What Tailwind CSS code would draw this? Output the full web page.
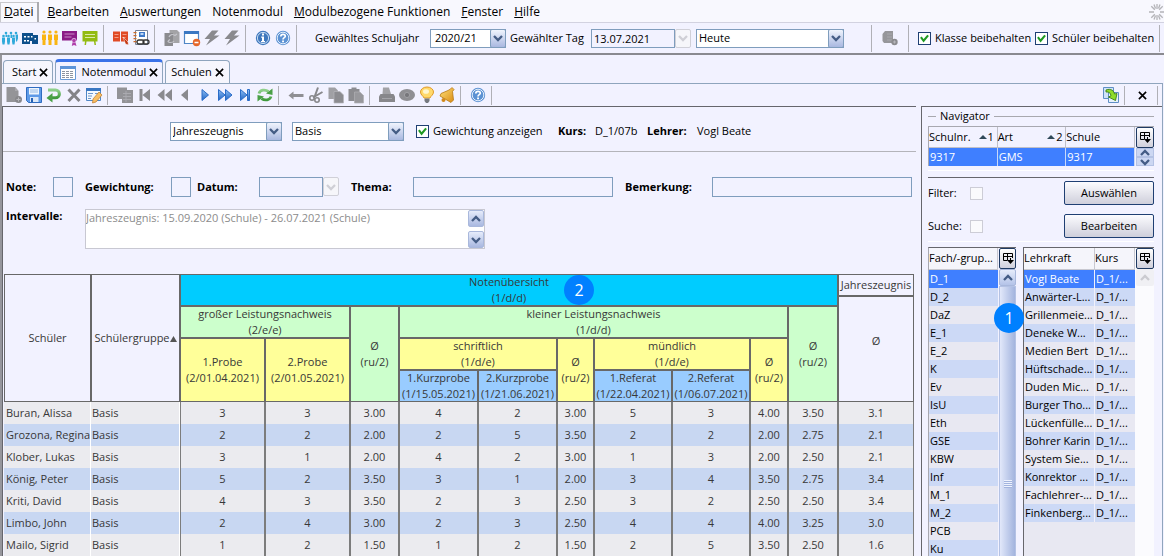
<!DOCTYPE html>
<html lang="de">
<head>
<meta charset="utf-8">
<title>Notenmodul</title>
<script src="https://cdn.jsdelivr.net/npm/@tailwindcss/browser@4"></script>
</head>
<body class="relative flex h-screen flex-col overflow-hidden bg-[#f2f2ff] font-['Open_Sans','Noto_Sans',sans-serif] text-xs text-black">

<svg class="absolute h-0 w-0">
  <defs>
    <linearGradient id="gb" x1="0" y1="0" x2="0" y2="1"><stop offset="0" stop-color="#8fc0f5"/><stop offset="1" stop-color="#1f63c4"/></linearGradient>
    <linearGradient id="gg" x1="0" y1="0" x2="0" y2="1"><stop offset="0" stop-color="#8fd08a"/><stop offset="1" stop-color="#3f9a3c"/></linearGradient>
    <linearGradient id="gy" x1="0" y1="0" x2="1" y2="1"><stop offset="0" stop-color="#ffe27a"/><stop offset="1" stop-color="#d98a12"/></linearGradient>
  </defs>
  <symbol id="i-pupils" viewBox="0 0 18 18"><g fill="#2fa9da"><circle cx="5" cy="4" r="1.300"/><circle cx="10" cy="4" r="1.300"/><circle cx="15" cy="4" r="1.300"/><circle cx="2.500" cy="7" r="1.300"/><circle cx="7.500" cy="7" r="1.300"/><circle cx="12.500" cy="7" r="1.300"/><path d="M4.500 5.500H6v2.500h-1.500zM1 8.500h3v4l-.5 3h-2L1 12.500zM6 8.500h3v4l-.5 3h-2l-.5-3zM11 8.500h3v4l-.5 3h-2l-.5-3zM9.500 5.500H11V9H9.500zM14.500 5.500H17v4l-1 3h-1z"/></g></symbol>
  <symbol id="i-school" viewBox="0 0 18 18"><path fill="#0d4f8b" d="M1 4h11v2h5v9h-6v-3H9v3H1z"/><path fill="#fff" d="M3 7h2v1.500H3zM6.500 7h2v1.500h-2zM10 7h1.500v1.500H10zM3 11h2v1.500H3zM6 11h2v1.500H6zM13.500 9h1.500v1.500h-1.500z"/></symbol>
  <symbol id="i-people" viewBox="0 0 18 18"><g fill="#f9b514"><circle cx="3" cy="3" r="1.600"/><circle cx="9" cy="3" r="1.600"/><circle cx="15" cy="3" r="1.600"/><path d="M1 5.500h4V11h-.5v5h-3v-5H1zM7 5.500h4V11h-.5v5h-3v-5H7zM13 5.500h4V11h-.5v5h-3v-5H13z"/></g></symbol>
  <symbol id="i-board-p" viewBox="0 0 18 18"><path fill="#8b1a86" d="M1 2h15v9.500H1z"/><path stroke="#d9a8d7" stroke-width=".8" d="M3.500 5h10M3.500 8h7"/><circle cx="13" cy="11.500" r="2.200" fill="#b03faa" stroke="#f2f2ff" stroke-width=".6"/><path fill="#b03faa" d="M11.500 13.500h3l1 3.500-2.500-1-2.200 1z"/></symbol>
  <symbol id="i-board-g" viewBox="0 0 18 18"><path fill="#93bb12" d="M1.500 2h15v10.500h-2L15 16h-1.500L13 12.500H5.500L5 16H3.500L4 12.500H1.500z"/><path stroke="#e3efba" stroke-width=".9" d="M4 5.500h10M4 8.500h10"/></symbol>
  <symbol id="i-book-r" viewBox="0 0 18 18"><path fill="#e04a26" d="M1 2.500h7v10H1zM9 2.500h7v10H9z"/><path stroke="#f6b3a2" stroke-width=".8" d="M2.500 5.500h4M2.500 8.500h4M10.500 5.500h4M10.500 8.500h3"/><path fill="#c23512" stroke="#fff" stroke-width=".5" d="M11 8l5 5 .5 3-3-1z"/></symbol>
  <symbol id="i-addr" viewBox="0 0 18 18"><path fill="#fff" stroke="#77839a" d="M3.500 1.500h12v14h-12z"/><path fill="#c96a2a" d="M1.500 3h3v1.200h-3zM1.500 6h3v1.200h-3zM1.500 9h3v1.200h-3zM1.500 12h3v1.200h-3z"/><path fill="#3d78c9" d="M7 3h6v5H7z"/><path fill="#bcd6f5" d="M8.500 4h3v2h-3z"/><path fill="none" stroke="#333" stroke-width="1.300" d="M7 11h3a2 2 0 010 4H7a2 2 0 010-4zM13 11h2a2 2 0 010 4h-2a2 2 0 010-4z"/></symbol>
  <symbol id="i-files" viewBox="0 0 18 18"><path fill="#a3a3a6" d="M6.500 1H14l2.500 2.500V14h-10z"/><path fill="#8b8b8f" d="M1.500 4H10v13H1.500z"/><path fill="none" stroke="#c4c4ca" stroke-width="1.200" d="M5 12c0 2 5 2 6 0M7 10.500L5 12M6 8c1-3 4-3 6-1.500L14 5"/></symbol>
  <symbol id="i-win" viewBox="0 0 18 18"><path fill="#fff" stroke="#4f86c6" stroke-width="1.200" d="M1.500 2.500h14v12h-14z"/><path fill="#3a77c2" d="M1 2h15v3H1z"/><circle cx="13.500" cy="13.500" r="3.700" fill="#e5672a"/><path stroke="#fff" stroke-width="1.500" d="M11.500 13.500h4"/></symbol>
  <symbol id="i-bolt" viewBox="0 0 18 18"><path fill="#8a8a8e" d="M9 1.500h6.500L11 6.500h5.500L3 16.500 7 10H1.500z"/></symbol>
  <symbol id="i-info" viewBox="0 0 18 18"><circle cx="9" cy="9" r="7.200" fill="#3f78bd"/><circle cx="9" cy="9" r="5.600" fill="none" stroke="#d6e6f8" stroke-width=".9"/><path fill="#fff" d="M8 4.500h2v2H8zM7.200 7.500H10V12h1v1.200H7V12h1V8.700h-.8z"/></symbol>
  <symbol id="i-help" viewBox="0 0 18 18"><circle cx="9" cy="9" r="7.200" fill="#5c92d3"/><circle cx="9" cy="9" r="5.800" fill="none" stroke="#e4effb" stroke-width="1"/><path fill="none" stroke="#fff" stroke-width="1.700" d="M6.800 7.500c0-3 4.500-2.800 4.500-.3 0 1.500-2.300 1.500-2.300 3.300"/><path fill="#fff" d="M8.100 11.500H10v1.700H8.100z"/></symbol>
  <symbol id="i-db" viewBox="0 0 18 18"><path fill="#96969a" d="M1.500 5L4 2h8v12H3l-1.500-2z"/><path stroke="#a8a8ad" d="M6 5h5M6 8h5M6 11h5"/><circle cx="13.500" cy="13" r="3.200" fill="#8b8b8f"/><path stroke="#b5b5ba" d="M12 13h3M13.500 11.500v3"/></symbol>
  <symbol id="i-doc" viewBox="0 0 18 18"><path fill="#949498" d="M1.500 1H10l3.500 4v11h-12z"/><path fill="#a9a9ae" d="M10 1l3.500 4H10z"/><circle cx="13.500" cy="13.500" r="3.500" fill="#87878b"/><path stroke="#b8b8bd" d="M11.500 13.500h4M13.500 11.500v4"/></symbol>
  <symbol id="i-save" viewBox="0 0 18 18"><path fill="#5e9ae8" stroke="#2f6cc0" d="M1.500 1.500h15v15h-13l-2-2z"/><path fill="#eef5fd" d="M4 2h10v6.500H4z"/><path stroke="#7ea9de" stroke-width=".8" d="M5 4h8M5 6h8"/><path fill="#dbe8f9" d="M5 11h8.500v5H5z"/><path fill="#2762b5" d="M6 12h2v4H6z"/></symbol>
  <symbol id="i-undo" viewBox="0 0 18 18"><path fill="none" stroke="url(#gg)" stroke-width="3" d="M3 4h7.500a3.800 3.800 0 010 7.800H6"/><path fill="#4aa046" d="M7.500 7v9.500L1.500 12z"/></symbol>
  <symbol id="i-x" viewBox="0 0 18 18"><path fill="none" stroke="#838387" stroke-width="3" d="M3.500 3.500l11 11.500M14.500 3.500l-11 11.500"/></symbol>
  <symbol id="i-edit" viewBox="0 0 18 18"><path fill="#f4f8fe" stroke="#4f86c6" d="M1.500 2.500h14v12h-14z"/><path fill="#3a77c2" d="M1 2h15v3H1z"/><path stroke="#6f97cc" d="M3 7.500h5M3 10h4M3 12.500h3M10 7.500h4"/><path fill="#f8bd62" stroke="#c07a24" stroke-width=".7" d="M14 6l3 3-6 7-3.500 1L8 13z"/></symbol>
  <symbol id="i-grid" viewBox="0 0 18 18"><path fill="#939397" d="M1 1.500h10V4h6v13H6v-4H1z"/><path stroke="#adadb2" stroke-width=".9" d="M7 7.500h8M7 10.500h8M7 13.500h8M10 5v11"/></symbol>
  <symbol id="i-first" viewBox="0 0 18 18"><path fill="#8a8a8e" d="M3.500 3h3v12h-3zM14 3v12L6.500 9z"/></symbol>
  <symbol id="i-rew" viewBox="0 0 18 18"><path fill="#8a8a8e" d="M8.500 3v12L1.500 9zM16 3v12L9 9z"/></symbol>
  <symbol id="i-prev" viewBox="0 0 18 18"><path fill="#8a8a8e" d="M12 3v12L5 9z"/></symbol>
  <symbol id="i-next" viewBox="0 0 18 18"><path fill="url(#gb)" stroke="#2a6cc8" d="M6 3.500v11L12.500 9z"/></symbol>
  <symbol id="i-ff" viewBox="0 0 18 18"><path fill="url(#gb)" stroke="#2a6cc8" d="M2.500 3.500v11L9 9zM9.500 3.500v11L16 9z"/></symbol>
  <symbol id="i-last" viewBox="0 0 18 18"><path fill="url(#gb)" stroke="#2a6cc8" d="M4.500 3.500v11L11 9zM11.500 3.500h2v11h-2z"/></symbol>
  <symbol id="i-refresh" viewBox="0 0 18 18"><path fill="none" stroke="url(#gg)" stroke-width="2.800" d="M3 7.500C4 3.800 9 3 12.500 5.500M15 10.500C14 14.200 9 15 5.500 12.500"/><path fill="#4aa046" d="M16.500 2.500V9L10 7.500zM1.500 15.500V9L8 10.500z"/></symbol>
  <symbol id="i-arrow" viewBox="0 0 18 18"><path fill="#8f8f93" d="M1.500 9.500l5-4v2.500h10v3h-10v2.500z"/></symbol>
  <symbol id="i-cut" viewBox="0 0 18 18"><path fill="none" stroke="#88888c" stroke-width="2" d="M11 1.500L7.500 11M15.500 6L6 11.500"/><circle cx="5" cy="12" r="2.200" fill="none" stroke="#88888c" stroke-width="1.600"/><circle cx="10" cy="14" r="2.200" fill="none" stroke="#88888c" stroke-width="1.600"/></symbol>
  <symbol id="i-copy" viewBox="0 0 18 18"><path fill="#a0a0a4" d="M1.500 1.500H8L11 4.500V13H1.500z"/><path fill="#8c8c90" stroke="#b6b6bb" stroke-width=".7" d="M7 5.500h6l3.500 3.500v8H7z"/></symbol>
  <symbol id="i-paste" viewBox="0 0 18 18"><path fill="#8c8c90" d="M1.500 3h3V1.500h5V3h3v12h-11z"/><path fill="#98989c" stroke="#b0b0b5" stroke-width=".7" d="M7.500 6H13l3.500 3.500V17h-9z"/></symbol>
  <symbol id="i-print" viewBox="0 0 18 18"><path fill="#a2a2a6" d="M5 1.500h6L13 8H4.500z"/><path fill="#87878b" d="M2.500 8h13l1.500 2.500V16H1v-5.500z"/><path stroke="#a4a4a9" d="M4 12.500h10"/></symbol>
  <symbol id="i-eye" viewBox="0 0 18 18"><ellipse cx="9" cy="9" rx="8" ry="6" fill="#8f8f93"/><circle cx="9" cy="9" r="2.600" fill="#77777b" stroke="#a0a0a4"/></symbol>
  <symbol id="i-bulb" viewBox="0 0 18 18"><path fill="#ffd96b" stroke="#e09a28" d="M6 12C5.500 10 2.500 9 2.500 6A6.500 5 0 0115.500 6c0 3-3 4-3.500 6z"/><ellipse cx="8" cy="5.500" rx="3" ry="2.300" fill="#fff6d0"/><path fill="#75797f" d="M6.500 12.500h5V15l-1.500 2H8l-1.500-2z"/></symbol>
  <symbol id="i-bell" viewBox="0 0 18 18"><path fill="url(#gy)" stroke="#b87812" stroke-width=".8" d="M14 1.500l2 2-1.500 2 1 8.500-2.500 2.500L2 10l1-2.500 7-3L12.500 3z"/><circle cx="5.500" cy="14" r="2" fill="#d1891a"/></symbol>
  <symbol id="i-export" viewBox="0 0 18 18"><path fill="#cfe3f8" stroke="#5f8fc4" d="M1.500 1.500h10v11h-10z"/><path fill="#e6f1fb" stroke="#5f8fc4" d="M6.500 6.500h10v10h-10z"/><path fill="#8fdc2a" stroke="#3c7f12" stroke-width=".9" d="M4 4c5-2 8 1 8.500 4L15 7.500 13.500 14.500 6.500 11l2.500-1.200C8.500 7 7 5.500 4 6z"/></symbol>
  <symbol id="i-table" viewBox="0 0 16 14"><path fill="#fff" stroke="#6a9ad4" d="M.5.500h15v13H.5z"/><path fill="#5d94d8" d="M0 0h16v3H0z"/><path stroke="#8d949f" stroke-dasharray="3 1" d="M2 5.500h12M2 7.500h12M2 9.500h12M2 11.500h12"/></symbol>
  <symbol id="i-down" viewBox="0 0 10 8"><path fill="none" stroke="currentColor" stroke-width="2.300" d="M1 2l4 4 4-4"/></symbol>
  <symbol id="i-up" viewBox="0 0 10 8"><path fill="none" stroke="currentColor" stroke-width="2.300" d="M1 6l4-4 4 4"/></symbol>
  <symbol id="i-tick" viewBox="0 0 10 10"><path fill="none" stroke="#1f9a22" stroke-width="2.300" d="M1 3.500l3 4 5-6"/></symbol>
  <symbol id="i-close" viewBox="0 0 10 10"><path fill="none" stroke="#000" stroke-width="1.800" d="M1 1l8 8M9 1L1 9"/></symbol>
  <symbol id="i-cols" viewBox="0 0 12 13"><path fill="none" stroke="#000" d="M5 8.500H1.500v-7h9V6M1.500 4.500h9M5.500 1.500v7"/><path fill="#000" d="M5 8h7l-3.500 4zM8 6h1v2H8z"/></symbol>
  <symbol id="i-spin" viewBox="0 0 16 16"><path stroke="#b4b4b8" stroke-width="1.300" d="M8 0v5M8 11v5M0 8h5M11 8h5M2.300 2.300l3.500 3.500M10.200 10.200l3.500 3.500M13.700 2.300l-3.500 3.500M5.800 10.200l-3.500 3.500M5 .6l1.500 4M9.500 11.400l1.500 4M11 .6l-1.500 4M6.500 11.400l-1.500 4"/></symbol>
</svg>

<nav class="flex h-[23px] shrink-0 items-center border-b border-[#d2d2e0] bg-[#f8f8fe] pt-0.5 text-xs">
  <a href="#" class="mr-2 flex h-full items-center border-r-2 border-[#aaaaae] pr-1 pl-1 shadow-[inset_1px_1px_0_#c8c8cc]"><span><u>D</u>atei</span></a>
  <a href="#" class="mr-[11px]"><u>B</u>earbeiten</a>
  <a href="#" class="mr-[11px]"><u>A</u>uswertungen</a>
  <a href="#" class="mr-[11px]">Notenmodul</a>
  <a href="#" class="mr-[11px]"><u>M</u>odulbezogene Funktionen</a>
  <a href="#" class="mr-[11px]"><u>F</u>enster</a>
  <a href="#"><u>H</u>ilfe</a>
  <svg class="-mr-px ml-auto h-4 w-4"><use href="#i-spin"/></svg>
</nav>

<div class="flex h-8 shrink-0 items-center border-b-2 border-[#8a8a90] text-[11px]">
  <div id="tb1" class="flex items-center"></div>
  <label for="year" class="ml-[11px] w-[115px]">Gewähltes Schuljahr</label>
  <span class="relative flex w-[76px]"><select id="year" class="h-[19px] w-full appearance-none border border-[#7f9dbd] bg-white pl-1 leading-4"><option>2020/21</option></select><span data-arrow></span></span>
  <label for="day" class="ml-1 w-[81px] whitespace-nowrap">Gewählter Tag</label>
  <span class="relative flex w-[100px]"><input id="day" value="13.07.2021" class="mr-4 h-[19px] w-[84px] border border-[#7f9dbd] bg-transparent pl-0.5"><span data-arrow="off"></span></span>
  <span class="relative ml-[5px] flex w-[148px]"><select aria-label="Tag" class="h-[19px] w-full appearance-none border border-[#7f9dbd] bg-white pl-0.5 leading-4"><option>Heute</option></select><span data-arrow></span></span>
  <span class="ml-[27px] h-[27px] w-px bg-[#b0b0b6]"></span>
  <button class="mx-2 flex w-5 justify-center" aria-label="Datenbank"><svg class="h-[18px] w-[18px]"><use href="#i-db"/></svg></button>
  <span class="mr-[9px] h-[27px] w-px bg-[#b0b0b6]"></span>
  <label class="flex w-[117px] items-center gap-1 whitespace-nowrap"><span data-check></span>Klasse beibehalten</label>
  <label class="flex items-center gap-1 whitespace-nowrap"><span data-check></span>Schüler beibehalten</label>
  <span class="mr-1 ml-auto h-[27px] w-px bg-[#b0b0b6]"></span>
</div>

<div class="flex min-h-0 flex-1 flex-col border-l-2 border-[#96969c] pr-px">
  <div role="tablist" class="flex h-[29px] shrink-0 items-end gap-0.5 border-b border-[#8fa5bd] pl-px">
    <button role="tab" class="flex h-[23px] items-center gap-[3px] rounded-t-sm border border-b-0 border-[#8fa5bd] bg-[#f6f6fd] pr-1 pl-2 text-[11px]">Start<svg class="h-[9px] w-[9px]"><use href="#i-close"/></svg></button>
    <button role="tab" aria-selected="true" class="flex h-6 items-center gap-[3px] rounded-t-sm border border-t-3 border-b-0 border-[#8fa5bd] border-t-[#3a72e8] bg-[#f2f2ff] px-1 text-[11px]"><svg class="mr-0.5 h-[14px] w-4"><use href="#i-table"/></svg>Notenmodul<svg class="h-[9px] w-[9px]"><use href="#i-close"/></svg></button>
    <button role="tab" class="flex h-[23px] items-center gap-[3px] rounded-t-sm border border-b-0 border-[#8fa5bd] bg-[#f6f6fd] px-[5px] text-[11px]">Schulen<svg class="h-[9px] w-[9px]"><use href="#i-close"/></svg></button>
  </div>

  <div class="flex min-h-0 flex-1 flex-col border-r border-[#8fa5bd]">
  <div class="flex h-[22px] shrink-0 items-center">
    <div id="tb2" class="flex items-center pl-0.5"></div>
    <button class="ml-auto flex h-[22px] w-5 items-center justify-center" aria-label="Export"><svg class="h-[18px] w-[18px]"><use href="#i-export"/></svg></button>
    <span class="mx-[3px] h-[19px] w-px bg-[#b0b0b6]"></span>
    <button class="flex w-[29px] justify-center" aria-label="Schließen"><svg class="h-[9px] w-[9px]"><use href="#i-close"/></svg></button>
    <span class="mr-1 h-[19px] w-px bg-[#b0b0b6]"></span>
  </div>

  <div class="flex min-h-0 flex-1 gap-[5px]">
    <main class="flex min-w-0 flex-1 flex-col overflow-hidden border-t border-l border-[#66666c]">
      <div class="flex h-[45px] shrink-0 items-center border-b border-[#b4b4ba] pt-1 pl-[167px] text-[11px]">
        <span class="relative flex w-28"><select aria-label="Zeugnis" class="h-[19px] w-full appearance-none border border-[#7f9dbd] bg-white pl-0.5 leading-4"><option>Jahreszeugnis</option></select><span data-arrow></span></span>
        <span class="relative ml-2.5 flex w-28"><select aria-label="Gruppe" class="h-[19px] w-full appearance-none border border-[#7f9dbd] bg-white pl-0.5 leading-4"><option>Basis</option></select><span data-arrow></span></span>
        <label class="ml-3 flex w-[142px] items-center gap-1 whitespace-nowrap"><span data-check></span>Gewichtung anzeigen</label>
        <b class="w-[37px]">Kurs:</b><span class="w-[52px]">D_1/07b</span>
        <b class="w-[50px]">Lehrer:</b><span>Vogl Beate</span>
      </div>

      <form class="flex flex-col gap-3 pt-[25px] pr-1 pl-[3px] text-[11px] font-bold">
        <div class="flex items-center">
          <label for="note" class="w-[47px]">Note:</label><input id="note" class="h-5 w-5 border border-[#7f9dbd]">
          <label for="gew" class="ml-3 w-[86px]">Gewichtung:</label><input id="gew" class="h-5 w-5 border border-[#7f9dbd]">
          <label for="datum" class="ml-1.5 w-[62px]">Datum:</label><span class="relative flex w-20"><input id="datum" class="mr-4 h-5 w-16 border border-[#7f9dbd]"><span data-arrow="off"></span></span>
          <label for="thema" class="ml-3 w-[62px]">Thema:</label><input id="thema" class="h-5 min-w-0 flex-1 border border-[#7f9dbd]">
          <label for="bem" class="ml-3 w-[87px]">Bemerkung:</label><input id="bem" class="h-5 min-w-0 flex-1 border border-[#7f9dbd]">
        </div>
        <div class="flex items-start">
          <label for="int" class="w-[79px]">Intervalle:</label>
          <div class="flex h-10 w-[400px] border border-[#c8c8d2] bg-white">
            <textarea id="int" readonly class="min-w-0 flex-1 resize-none overflow-hidden leading-4 font-normal text-[#8c8c8c]">Jahreszeugnis: 15.09.2020 (Schule) - 26.07.2021 (Schule)</textarea>
            <div class="flex w-4 flex-col justify-between text-[#445c85]">
              <button type="button" aria-label="Nach oben" class="flex h-[17px] items-center justify-center rounded-xs border border-[#a9b8dc] bg-linear-to-b from-[#e6ecfb] to-[#a9b8e0]"><svg class="h-2 w-2.5"><use href="#i-up"/></svg></button>
              <button type="button" aria-label="Nach unten" class="flex h-[17px] items-center justify-center rounded-xs border border-[#a9b8dc] bg-linear-to-b from-[#e6ecfb] to-[#a9b8e0]"><svg class="h-2 w-2.5"><use href="#i-down"/></svg></button>
            </div>
          </div>
        </div>
      </form>

      <div class="relative mt-[25px] mr-0.5 ml-px">
      <table class="w-full table-fixed border-separate border-spacing-0 text-[11px] text-[#383838]">
        <colgroup><col class="w-[87px]"><col class="w-[89px]"><col class="w-[85px]"><col class="w-[85px]"><col class="w-[49px]"><col class="w-[79px]"><col class="w-[79px]"><col class="w-[37px]"><col class="w-[78px]"><col class="w-[78px]"><col class="w-[38px]"><col class="w-[50px]"><col class="w-[76px]"></colgroup>
        <thead class="leading-4 whitespace-nowrap [&_th]:p-0 [&_th]:font-normal [&_th]:inset-ring [&_th]:inset-ring-[#686868]">
          <tr class="h-8"><th rowspan="4">Schüler</th><th rowspan="4">Schülergruppe<svg class="inline h-1.5 w-[7px]" viewBox="0 0 7 6"><path fill="#555" d="M3.500 0L7 6H0z"/></svg></th><th colspan="10" class="bg-[#00ccff]">Notenübersicht<br>(1/d/d)</th><th rowspan="4" class="align-top"><div class="h-[23px] border-b-2 border-[#686868] leading-[22px]">Jahreszeugnis</div><div class="pt-9">Ø</div></th></tr>
          <tr class="h-8"><th colspan="2" class="bg-[#ccffcc]">großer Leistungsnachweis<br>(2/e/e)</th><th rowspan="3" class="bg-[#ccffcc]">Ø<br>(ru/2)</th><th colspan="6" class="bg-[#ccffcc]">kleiner Leistungsnachweis<br>(1/d/d)</th><th rowspan="3" class="bg-[#ccffcc]">Ø<br>(ru/2)</th></tr>
          <tr class="h-8"><th rowspan="2" class="bg-[#ffff99]">1.Probe<br>(2/01.04.2021)</th><th rowspan="2" class="bg-[#ffff99]">2.Probe<br>(2/01.05.2021)</th><th colspan="2" class="bg-[#ffff99]">schriftlich<br>(1/d/e)</th><th rowspan="2" class="bg-[#ffff99]">Ø<br>(ru/2)</th><th colspan="2" class="bg-[#ffff99]">mündlich<br>(1/d/e)</th><th rowspan="2" class="bg-[#ffff99]">Ø<br>(ru/2)</th></tr>
          <tr class="h-8"><th class="bg-[#99ccff]">1.Kurzprobe<br>(1/15.05.2021)</th><th class="bg-[#99ccff]">2.Kurzprobe<br>(1/21.06.2021)</th><th class="bg-[#99ccff]">1.Referat<br>(1/22.04.2021)</th><th class="bg-[#99ccff]">2.Referat<br>(1/06.07.2021)</th></tr>
        </thead>
        <tbody id="grades"></tbody>
      </table>
      <span class="absolute top-px left-[560px] flex h-[30px] w-[30px] items-center justify-center rounded-full bg-[#0080ff] text-base text-white">2</span>
      </div>
    </main>

    <aside class="flex w-[241px] shrink-0 flex-col overflow-hidden border-t border-l border-[#66666c] pr-2 pl-1.5 text-[11px]">
      <div class="flex h-[19px] items-center gap-1"><span class="h-px w-2 bg-[#a8a8ae]"></span><span>Navigator</span><span class="h-px flex-1 bg-[#a8a8ae]"></span></div>
      <div class="flex h-10 border-t border-l border-[#a8a8b0]">
        <table class="min-w-0 flex-1 border-separate border-spacing-0 text-left whitespace-nowrap">
          <thead><tr class="h-[21px] [&_th]:border-r [&_th]:border-b [&_th]:border-[#c0c0c8] [&_th]:p-0 [&_th]:font-normal"><th class="w-1/3"><span class="flex items-center">Schulnr.<svg class="mr-px ml-auto h-1 w-2" viewBox="0 0 8 4"><path fill="#2f4858" d="M4 0l4 4H0z"/></svg>1&nbsp;</span></th><th class="w-1/3"><span class="flex items-center">Art<svg class="mr-px ml-auto h-1 w-2" viewBox="0 0 8 4"><path fill="#2f4858" d="M4 0l4 4H0z"/></svg>2&nbsp;</span></th><th class="w-1/3">Schule</th></tr></thead>
          <tbody><tr class="h-[18px] bg-[#3f7fff] text-white [&_td]:border-r [&_td]:border-[#c8d8f8] [&_td]:p-0 [&_td]:pl-px"><td>9317</td><td>GMS</td><td>9317</td></tr></tbody>
        </table>
        <div class="flex w-[19px] flex-col pl-px text-[#445c85]">
          <button class="flex h-[21px] items-center justify-center rounded-xs border border-[#1f3a63] bg-linear-to-b from-white to-[#d0d0dc]" aria-label="Spalten"><svg class="h-[13px] w-3"><use href="#i-cols"/></svg></button>
          <button class="flex h-[9px] items-center justify-center border border-[#b4c2e4] bg-[#ccd7f2]" aria-label="Hoch"><svg class="h-2 w-2.5"><use href="#i-up"/></svg></button>
          <button class="flex h-[9px] items-center justify-center border border-[#b4c2e4] bg-[#ccd7f2]" aria-label="Runter"><svg class="h-2 w-2.5"><use href="#i-down"/></svg></button>
        </div>
      </div>
      <div class="mt-1 border-t border-white"></div>
      <div class="mt-1.5 flex h-[65px] shrink-0 flex-col justify-center gap-[9px] border-t border-b border-t-[#66666c] border-b-white">
        <div class="flex items-center"><label for="filter" class="w-[42px]">Filter:</label><input id="filter" type="checkbox" disabled class="h-[13px] w-[13px] appearance-none border border-[#cdcdd6] bg-[#fafafc]"><button class="ml-auto h-6 w-[90px] rounded-xs border border-[#1f3f73] bg-linear-to-b from-[#fcfcff] to-[#cfcfdb]">Auswählen</button></div>
        <div class="flex items-center"><label for="suche" class="w-[42px]">Suche:</label><input id="suche" type="checkbox" disabled class="h-[13px] w-[13px] appearance-none border border-[#cdcdd6] bg-[#fafafc]"><button class="ml-auto h-6 w-[90px] rounded-xs border border-[#1f3f73] bg-linear-to-b from-[#fcfcff] to-[#cfcfdb]">Bearbeiten</button></div>
      </div>
      <div class="relative flex min-h-0 flex-1 pt-[5px]">
        <div class="flex w-[88px] overflow-hidden border-t border-l border-[#66666c] border-l-[#a8a8b0]">
          <div class="min-w-0 flex-1 bg-[#e8e8f2]">
          <table class="w-full table-fixed border-separate border-spacing-0 text-left whitespace-nowrap">
            <thead><tr class="h-[22px] bg-[#f5f5fb]"><th class="border-r border-b border-[#c8c8d0] p-0 font-normal">Fach/-grup...</th></tr></thead>
            <tbody id="subjects"></tbody>
          </table>
          </div>
          <div class="flex w-[18px] flex-col pl-px">
            <button class="flex h-[21px] items-center justify-center rounded-xs border border-[#1f3a63] bg-linear-to-b from-white to-[#d0d0dc]" aria-label="Spalten"><svg class="h-[13px] w-3"><use href="#i-cols"/></svg></button>
            <button class="flex h-[17px] items-center justify-center rounded-xs border border-[#a9b8dc] bg-linear-to-b from-[#e6ecfb] to-[#b4c3e8] text-[#445c85]" aria-label="Hoch"><svg class="h-2 w-2.5"><use href="#i-up"/></svg></button>
            <div class="flex min-h-0 flex-1 items-center justify-center border-x border-t border-[#b4c2e4] bg-linear-to-r from-[#e2e8fa] to-[#a3b4de] pt-[124px]"><span class="h-2 w-2 bg-[repeating-linear-gradient(#eef2fd_0_1px,#a3b4de_1px_2px)]"></span></div>
          </div>
        </div>
        <div class="ml-[7px] flex min-w-0 flex-1 border-t border-l border-[#66666c]">
          <div class="min-w-0 flex-1 bg-[#e8e8f2]">
          <table class="w-full table-fixed border-separate border-spacing-0 text-left whitespace-nowrap">
            <colgroup><col class="w-[71px]"><col class="w-10"></colgroup>
            <thead><tr class="h-[22px] bg-[#f5f5fb] [&_th]:border-r [&_th]:border-b [&_th]:border-[#c8c8d0] [&_th]:p-0 [&_th]:font-normal"><th>Lehrkraft</th><th>Kurs</th></tr></thead>
            <tbody id="teachers"></tbody>
          </table>
          </div>
          <div class="flex w-[19px] flex-col bg-[#fbfbfe] pl-px">
            <button class="flex h-[21px] items-center justify-center rounded-xs border border-[#1f3a63] bg-linear-to-b from-white to-[#d0d0dc]" aria-label="Spalten"><svg class="h-[13px] w-3"><use href="#i-cols"/></svg></button>
            <button disabled class="flex h-[17px] items-center justify-center rounded-xs bg-[#f0f0f4] text-[#cbcbd0]" aria-label="Hoch"><svg class="h-2 w-2.5"><use href="#i-up"/></svg></button>
          </div>
        </div>
        <span class="absolute top-[61px] left-[66px] flex h-[30px] w-[30px] items-center justify-center rounded-full bg-[#0080ff] text-base text-white">1</span>
      </div>
    </aside>
  </div>
  </div>
</div>

<script>
const $ = id => document.getElementById(id);
const icon = n => `<button class="flex h-[22px] w-5 items-center justify-center" aria-label="${n}"><svg class="h-[18px] w-[18px]"><use href="#i-${n}"/></svg></button>`;
const bar = (groups, sep) => groups.map(g => g.split(' ').map(icon).join('')).join(sep) + sep;
$('tb1').innerHTML = bar(['pupils school people board-p board-g', 'book-r addr', 'files win bolt bolt', 'info help'], '<span class="mr-[7px] ml-[3px] h-[27px] w-px bg-[#b0b0b6]"></span>');
$('tb2').innerHTML = bar(['doc save undo x edit', 'grid first rew prev next ff last refresh', 'arrow cut copy paste', 'print eye bulb bell', 'help'], '<span class="mr-[7px] ml-[3px] h-[19px] w-px bg-[#b0b0b6]"></span>');

document.querySelectorAll('[data-arrow]').forEach(e => {
  e.className = e.dataset.arrow === 'off'
    ? 'pointer-events-none absolute top-0 right-0 flex h-[19px] w-4 items-center justify-center rounded-xs border border-[#d0d0d8] bg-[#f6f6fa] text-[#cfcfd6]'
    : 'pointer-events-none absolute top-0 right-0 flex h-[19px] w-4 items-center justify-center rounded-xs border border-[#7f9dbd] bg-linear-to-b from-[#f0f4fd] to-[#a9b8e0] text-[#445c85]';
  e.innerHTML = '<svg class="h-2 w-2.5"><use href="#i-down"/></svg>';
});
document.querySelectorAll('[data-check]').forEach(e => {
  e.className = 'relative flex';
  e.innerHTML = '<input type="checkbox" checked class="peer h-[13px] w-[13px] appearance-none border border-[#1f3f73] bg-white"><svg class="pointer-events-none invisible absolute top-0.5 left-0.5 h-[9px] w-[9px] peer-checked:visible"><use href="#i-tick"/></svg>';
});

$('grades').innerHTML = [
  ['Buran, Alissa', 3, 3, '3.00', 4, 2, '3.00', 5, 3, '4.00', '3.50', '3.1'],
  ['Grozona, Regina', 2, 2, '2.00', 2, 5, '3.50', 2, 2, '2.00', '2.75', '2.1'],
  ['Klober, Lukas', 3, 1, '2.00', 4, 2, '3.00', 1, 3, '2.00', '2.50', '2.1'],
  ['König, Peter', 5, 2, '3.50', 3, 1, '2.00', 3, 4, '3.50', '2.75', '3.4'],
  ['Kriti, David', 4, 3, '3.50', 2, 3, '2.50', 3, 2, '2.50', '2.50', '3.4'],
  ['Limbo, John', 2, 4, '3.00', 2, 3, '2.50', 4, 4, '4.00', '3.25', '3.0'],
  ['Mailo, Sigrid', 1, 2, '1.50', 1, 2, '1.50', 2, 5, '3.50', '2.50', '1.6'],
].map(([n, ...v], i) => `<tr class="h-[22px] ${i % 2 ? 'bg-[#c8d7f2]' : 'bg-[#ebebef]'}"><td class="border-r border-white p-0 pl-0.5 whitespace-nowrap">${n}</td><td class="border-r border-white p-0 pl-px">Basis</td>${v.map(x => `<td class="border-x border-[#7c7c7c] p-0 text-center">${x}</td>`).join('')}</tr>`).join('');

const rowClass = i => i === 0 ? 'h-[18px] bg-[#3f7fff] text-white' : i % 2 ? 'h-[18px] bg-[#ccd9f6]' : 'h-[18px] bg-[#e8e8f2]';
$('subjects').innerHTML = ['D_1', 'D_2', 'DaZ', 'E_1', 'E_2', 'K', 'Ev', 'IsU', 'Eth', 'GSE', 'KBW', 'Inf', 'M_1', 'M_2', 'PCB', 'Ku']
  .map((s, i) => `<tr class="${rowClass(i)}"><td class="p-0 pl-px">${s}</td></tr>`).join('');
$('teachers').innerHTML = ['Vogl Beate', 'Anwärter-L...', 'Grillenmeie...', 'Deneke W...', 'Medien Bert', 'Hüftschade...', 'Duden Mic...', 'Burger Tho...', 'Lückenfülle...', 'Bohrer Karin', 'System Sie...', 'Konrektor ...', 'Fachlehrer-...', 'Finkenberg...']
  .map((s, i) => `<tr class="${rowClass(i)}"><td class="border-r border-[#f0f0fa] p-0 pl-px">${s}</td><td class="p-0 pl-px">D_1/...</td></tr>`).join('');
</script>
</body>
</html>
